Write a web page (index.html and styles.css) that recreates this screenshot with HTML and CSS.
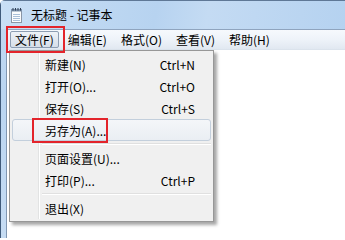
FILE: index.html
```html
<!DOCTYPE html>
<html lang="zh-CN">
<head>
<meta charset="utf-8">
<title>无标题 - 记事本</title>
<link rel="stylesheet" href="styles.css">
</head>
<body>
<div class="window">
  <div class="titlebar">
    <svg class="app-icon" width="13" height="15" viewBox="0 0 13 15">
      <rect x="1.5" y="2.5" width="10" height="12" fill="#fbfcfd" stroke="#8a96a6"/>
      <rect x="1" y="1" width="11" height="2.5" fill="#7e93ad"/>
      <g fill="#2c3e55">
        <rect x="2.5" y="0" width="1" height="2.5"/>
        <rect x="5" y="0" width="1" height="2.5"/>
        <rect x="7.5" y="0" width="1" height="2.5"/>
        <rect x="10" y="0" width="1" height="2.5"/>
      </g>
      <g stroke="#a9bfd8" stroke-width="1">
        <line x1="3" y1="6.5" x2="10" y2="6.5"/>
        <line x1="3" y1="8.5" x2="10" y2="8.5"/>
        <line x1="3" y1="10.5" x2="10" y2="10.5"/>
        <line x1="3" y1="12.5" x2="10" y2="12.5"/>
      </g>
    </svg>
    <span class="title">无标题 - 记事本</span>
  </div>
  <div class="client">
    <div class="menubar">
      <span class="menu-item active">文件(F)</span>
      <span class="menu-item">编辑(E)</span>
      <span class="menu-item">格式(O)</span>
      <span class="menu-item">查看(V)</span>
      <span class="menu-item">帮助(H)</span>
    </div>
    <div class="editor"></div>
  </div>

  <div class="dropdown">
    <div class="entry"><span>新建(N)</span><span class="key">Ctrl+N</span></div>
    <div class="entry"><span>打开(O)...</span><span class="key">Ctrl+O</span></div>
    <div class="entry"><span>保存(S)</span><span class="key">Ctrl+S</span></div>
    <div class="entry hover"><span>另存为(A)...</span></div>
    <div class="sep"></div>
    <div class="entry"><span>页面设置(U)...</span></div>
    <div class="entry"><span>打印(P)...</span><span class="key">Ctrl+P</span></div>
    <div class="sep"></div>
    <div class="entry"><span>退出(X)</span></div>
  </div>

  <div class="mark mark-file"></div>
  <div class="mark mark-saveas"></div>
</div>
</body>
</html>
```
FILE: styles.css
```css
html, body {
  margin: 0;
  padding: 0;
  width: 345px;
  height: 238px;
  overflow: hidden;
  background: #ffffff;
}

body {
  font-family: "Noto Sans CJK SC", "Noto Sans", sans-serif;
  font-size: 12px;
  color: #000;
}

.window {
  position: relative;
  width: 345px;
  height: 238px;
  box-sizing: border-box;
  border-left: 1px solid #3f5a7a;
  border-top: 1px solid #5f7896;
  border-top-left-radius: 5px;
  background: linear-gradient(to bottom, #c3daf2 0%, #bad5f1 40%, #c6dcf3 100%);
  display: flex;
  flex-direction: column;
}

.titlebar {
  height: 28px;
  display: flex;
  align-items: center;
  padding-left: 9px;
  background: linear-gradient(100deg, #c9dff5 0%, #b7d3f0 45%, #c4dbf3 60%, #b5d2f0 100%);
}

.app-icon {
  flex: none;
  margin-top: 1px;
}

.title {
  margin-left: 8px;
  line-height: 14px;
  color: #000;
}

.client {
  flex: 1;
  margin-left: 5px;
  border-left: 1px solid #8197b2;
  border-top: 1px solid #8fa4be;
  display: flex;
  flex-direction: column;
  background: #fff;
}

.menubar {
  height: 19px;
  display: flex;
  align-items: center;
  gap: 4px;
  padding-left: 3px;
  border-bottom: 1px solid #dbe3ec;
  background: linear-gradient(to bottom, #f6f9fd 0%, #eef3f9 50%, #e1e8f1 100%);
}

.menu-item {
  padding: 0 4px;
  height: 17px;
  line-height: 15px;
  box-sizing: border-box;
  border: 1px solid transparent;
}

.menu-item.active {
  border-color: #8d9db2;
  border-radius: 2px;
  background: linear-gradient(to bottom, #eef2f7 0%, #e2e8f0 50%, #d6dee8 100%);
}

.editor {
  flex: 1;
  background: #fff;
}

.dropdown {
  position: absolute;
  left: 8px;
  top: 49px;
  width: 199px;
  padding: 2px;
  border: 1px solid #979797;
  background: #f0f0f0;
  box-shadow: 3px 3px 3px rgba(0, 0, 0, 0.35);
}

.dropdown::before {
  content: "";
  position: absolute;
  left: 28px;
  top: 2px;
  bottom: 2px;
  width: 1px;
  background: #e2e3e3;
  border-right: 1px solid #ffffff;
}

.entry {
  position: relative;
  height: 22px;
  display: flex;
  align-items: center;
  justify-content: space-between;
  padding: 0 15px 0 32px;
  box-sizing: border-box;
  border: 1px solid transparent;
}

.entry.hover {
  border-color: #c3cfdc;
  border-radius: 3px;
  background: linear-gradient(to bottom, #f4f6f9 0%, #eaeef3 100%);
}

.key {
  text-align: right;
}

.sep {
  position: relative;
  height: 6px;
  margin-left: 28px;
}

.sep::after {
  content: "";
  position: absolute;
  left: 2px;
  right: 0;
  top: 2px;
  height: 1px;
  background: #e0e0e0;
  border-bottom: 1px solid #ffffff;
}

.mark {
  position: absolute;
  border: 2px solid #e3242b;
  box-sizing: border-box;
}

.mark-file {
  left: 5px;
  top: 25px;
  width: 59px;
  height: 27px;
}

.mark-saveas {
  left: 31px;
  top: 117px;
  width: 76px;
  height: 25px;
}
```
